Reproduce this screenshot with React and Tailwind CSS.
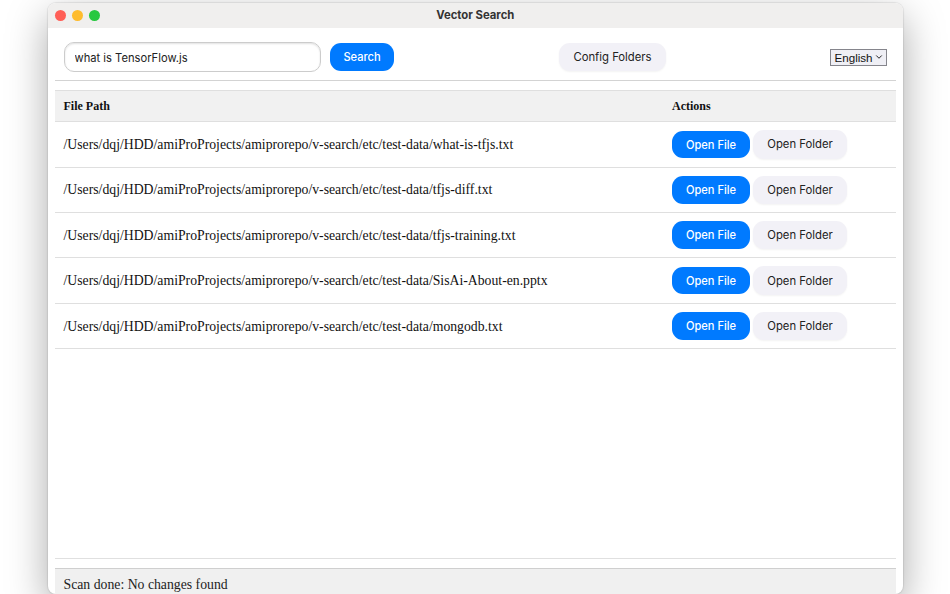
import { useState } from "react";
import { ChevronDown } from "lucide-react";

const ROOT = "/Users/dqj/HDD/amiProProjects/amiprorepo/v-search/etc/test-data/";

const FILES = [
  "what-is-tfjs.txt",
  "tfjs-diff.txt",
  "tfjs-training.txt",
  "SisAi-About-en.pptx",
  "mongodb.txt",
];

function Button({ primary, className, children }) {
  return (
    <button
      className={`rounded-[11px] pt-[1px] font-['Inter',sans-serif] whitespace-nowrap ${
        primary
          ? "h-[27.5px] bg-[#007aff] text-[11.1px] text-white font-medium"
          : "h-[28.5px] bg-[#f2f1f7] text-[11.3px] text-[#222] shadow-[0_1px_2px_rgba(0,0,0,0.05)]"
      } ${className}`}
    >
      {children}
    </button>
  );
}

export default function App() {
  const [query, setQuery] = useState("what is TensorFlow.js");

  return (
    <div className="h-[594px] w-[950px] overflow-hidden bg-white pt-[3px] pl-[48px]">
      <div className="flex h-[591px] w-[854.5px] flex-col overflow-hidden rounded-[8px] bg-white shadow-[0_0_1px_1px_rgba(0,0,0,0.08),0_14px_40px_rgba(0,0,0,0.34)]">
        {/* Title bar */}
        <div className="grid h-[25px] shrink-0 grid-cols-3 items-center bg-[#f0efee] px-[7px]">
          <div className="flex gap-[6.5px]">
            <span className="size-[10.5px] rounded-full bg-[#ff5f57]" />
            <span className="size-[10.5px] rounded-full bg-[#febc2e]" />
            <span className="size-[10.5px] rounded-full bg-[#28c840]" />
          </div>
          <p className="text-center font-['Inter',sans-serif] text-[11.3px] font-bold text-[#333]">
            Vector Search
          </p>
        </div>

        <div className="flex min-h-0 flex-1 flex-col px-[7px]">
          {/* Toolbar */}
          <div className="flex h-[53px] shrink-0 items-center border-b border-[#d3d3d3] pt-[6px] pl-[8.5px]">
            <input
              className="h-[30px] w-[257.5px] rounded-[10px] border border-[#ccc] px-[10px] pt-[1px] font-['Inter',sans-serif] text-[11.2px] text-[#222] shadow-[inset_0_1px_2px_rgba(0,0,0,0.12)] outline-none"
              value={query}
              onChange={(e) => setQuery(e.target.value)}
            />
            <Button primary className="ml-[9px] w-[64px]">Search</Button>
            <Button className="ml-[165px] w-[107px]">Config Folders</Button>
            <button className="mr-[9px] ml-auto flex h-[17px] w-[57px] items-center justify-between border border-[#85858c] bg-[#efeff5] pr-[2px] pl-[4px] font-['Liberation_Sans',sans-serif] text-[11.6px] leading-[15px] text-[#111]">
              <span className="pt-[1px]">English</span>
              <ChevronDown className="size-[10px] shrink-0" strokeWidth={2.2} />
            </button>
          </div>

          {/* Results */}
          <div className="mt-[8.5px] flex-1 border-b border-[#e0e0e0] font-['Liberation_Serif',serif] text-[#111]">
            <div className="flex h-[32.7px] items-center border-y border-[#dfdfdf] bg-[#f1f1f1] pl-[8.5px] text-[12px] font-bold">
              <span className="w-[608.5px]">File Path</span>
              <span>Actions</span>
            </div>
            {FILES.map((file) => (
              <div key={file} className="flex h-[45.4px] items-center border-b border-[#dfdfdf] pl-[8.5px]">
                <span className="w-[608.5px] pt-[2px] text-[13.74px] whitespace-nowrap">{ROOT}{file}</span>
                <Button primary className="w-[78px]">Open File</Button>
                <Button className="ml-[3px] w-[94px]">Open Folder</Button>
              </div>
            ))}
          </div>

          {/* Scan status */}
          <div className="mt-[9px] h-[26.5px] shrink-0 border-t border-[#cfcfcf] bg-[#f0f0f0] pt-[7px] pl-[8.5px] font-['Liberation_Serif',serif] text-[13.75px] leading-[17px] text-[#222]">
            Scan done: No changes found
          </div>
        </div>
      </div>
    </div>
  );
}
